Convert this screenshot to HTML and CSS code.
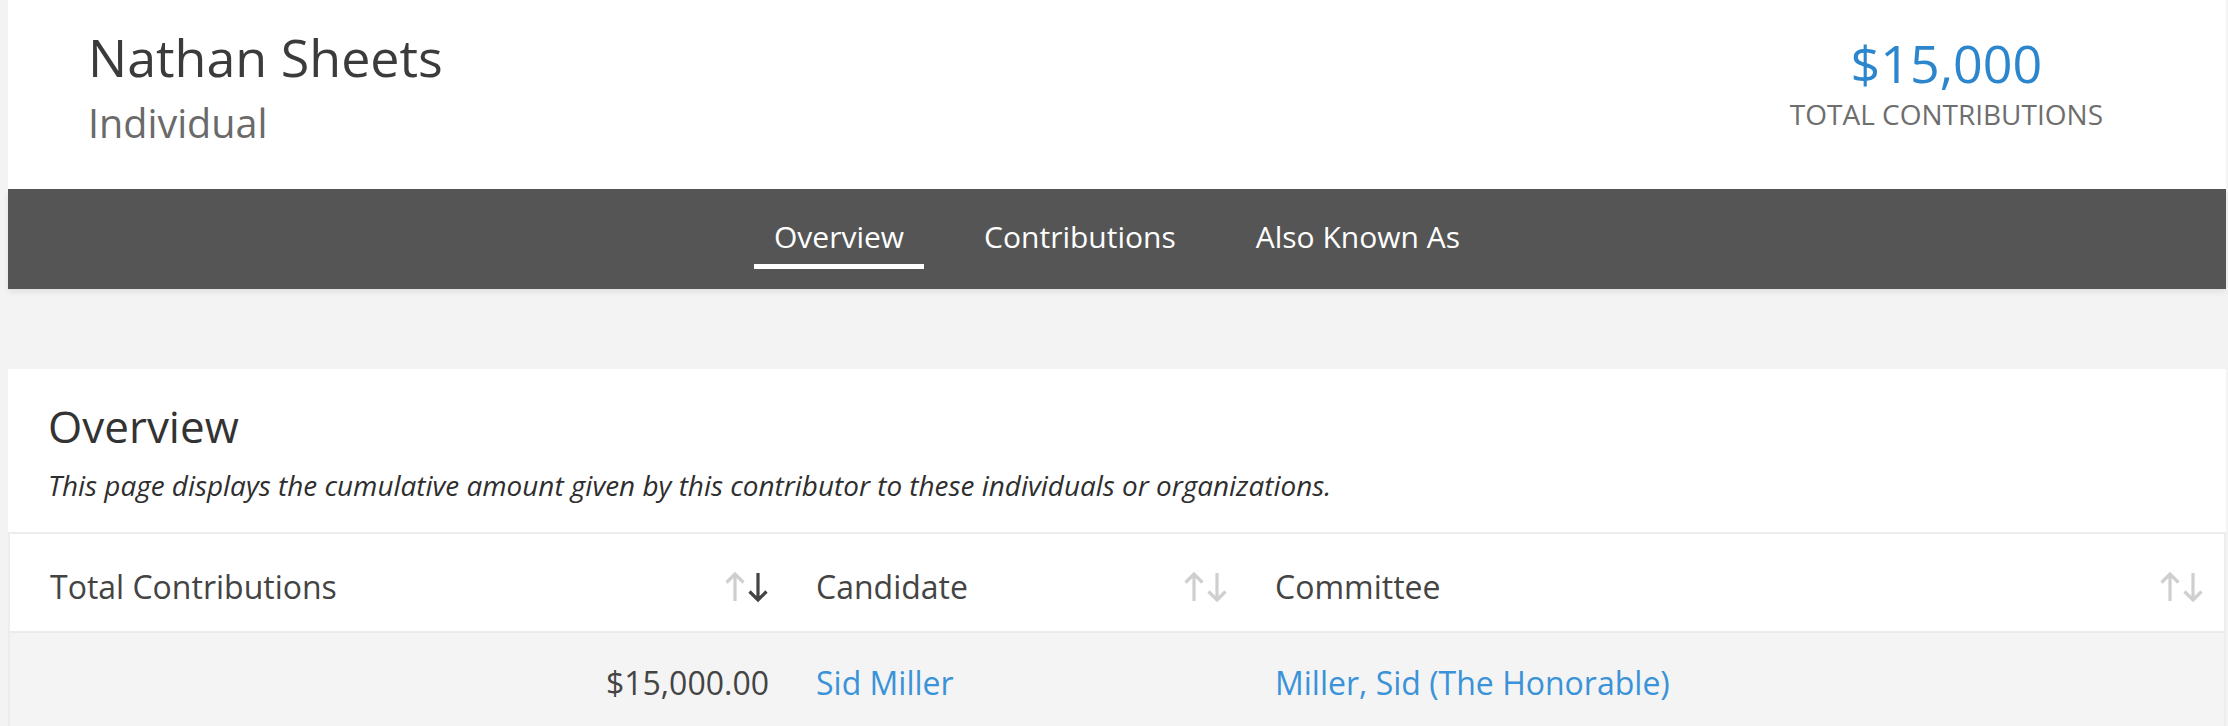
FILE: index.html
```html
<!DOCTYPE html>
<html lang="en">
<head>
<meta charset="utf-8">
<title>Nathan Sheets</title>
<link rel="stylesheet" href="styles.css">
</head>
<body>
<header class="profile">
  <div class="profile-name">
    <h1 class="name">Nathan Sheets</h1>
    <div class="kind">Individual</div>
  </div>
  <div class="profile-total">
    <div class="total-amount">$15,000</div>
    <div class="total-label">TOTAL CONTRIBUTIONS</div>
  </div>
</header>
<nav class="tabs">
  <a class="tab active">Overview</a>
  <a class="tab">Contributions</a>
  <a class="tab">Also Known As</a>
</nav>
<main class="content">
  <section class="card">
    <h2 class="card-title">Overview</h2>
    <p class="card-desc">This page displays the cumulative amount given by this contributor to these individuals or organizations.</p>
    <div class="table">
      <div class="row head">
        <div class="cell first"><span>Total Contributions</span>
          <svg class="sort" viewBox="0 0 44 32" width="44" height="32"><path class="up" d="M10 30V3M1.5 11.5L10 3l8.5 8.5"/><path class="down on" d="M33 2v27M24.5 20.5L33 29l8.5-8.5"/></svg>
        </div>
        <div class="cell"><span>Candidate</span>
          <svg class="sort" viewBox="0 0 44 32" width="44" height="32"><path class="up" d="M10 30V3M1.5 11.5L10 3l8.5 8.5"/><path class="down" d="M33 2v27M24.5 20.5L33 29l8.5-8.5"/></svg>
        </div>
        <div class="cell last"><span>Committee</span>
          <svg class="sort" viewBox="0 0 44 32" width="44" height="32"><path class="up" d="M10 30V3M1.5 11.5L10 3l8.5 8.5"/><path class="down" d="M33 2v27M24.5 20.5L33 29l8.5-8.5"/></svg>
        </div>
      </div>
      <div class="row body">
        <div class="cell first amount">$15,000.00</div>
        <div class="cell"><a class="link">Sid Miller</a></div>
        <div class="cell last"><a class="link">Miller, Sid (The Honorable)</a></div>
      </div>
    </div>
  </section>
</main>
</body>
</html>
```
FILE: styles.css
```css
* { box-sizing: border-box; }
html, body { margin: 0; }
body {
  padding: 0 2px 0 8px;
  background: #f3f3f3;
  font-family: "Open Sans", "Noto Sans", sans-serif;
  color: #333;
  height: 726px;
  overflow: hidden;
}
.profile {
  background: #fff;
  height: 189px;
  display: flex;
  justify-content: space-between;
  align-items: flex-start;
  padding: 0 123px 0 80px;
}
.profile-name { padding-top: 26px; }
.name {
  margin: 0;
  font-size: 52px;
  font-weight: 400;
  line-height: 62px;
  color: #3b3b3b;
}
.kind {
  margin-top: 12px;
  font-size: 39.5px;
  line-height: 47px;
  color: #6a6a6a;
}
.profile-total {
  padding-top: 32px;
  text-align: center;
}
.total-amount {
  font-size: 52px;
  line-height: 62px;
  color: #2b86cd;
}
.total-label {
  margin-top: 3px;
  font-size: 28px;
  line-height: 34px;
  color: #6e6e6e;
}
.tabs {
  height: 100px;
  background: #555;
  box-shadow: 0 3px 6px rgba(0,0,0,0.08);
  display: flex;
  justify-content: center;
  align-items: flex-start;
  padding-top: 30px;
  gap: 40px;
  position: relative;
}
.tab {
  color: #fff;
  font-size: 30px;
  line-height: 36px;
  padding: 0 20px 9px;
  border-bottom: 5px solid transparent;
}
.tab.active { border-bottom-color: #fff; }
.content { padding-top: 80px; }
.card {
  background: #fff;
  padding-top: 31px;
}
.card-title {
  margin: 0 0 0 40px;
  font-size: 44px;
  font-weight: 400;
  line-height: 53px;
  color: #333;
}
.card-desc {
  margin: 17px 0 0 40px;
  font-size: 27.9px;
  line-height: 30px;
  font-style: italic;
  color: #2e2e2e;
}
.table {
  margin-top: 32px;
  border: 2px solid #ededed;
  border-bottom: none;
}
.row {
  display: grid;
  grid-template-columns: 783px 459px 1fr;
}
.row.head {
  background: #fff;
  height: 99px;
  padding-top: 8px;
  border-bottom: 2px solid #ebebeb;
}
.row.body {
  background: #f4f4f4;
  height: 98px;
}
.cell {
  display: flex;
  align-items: center;
  justify-content: space-between;
  padding: 0 24px 0 23px;
  font-size: 32px;
  color: #444;
}
.cell.first { padding-left: 40px; }
.cell.last { padding-right: 20px; }
.cell.amount { justify-content: flex-end; }
.link { color: #3a93d8; }
.sort { display: block; flex: none; }
.sort path { fill: none; stroke: #cfcfcf; stroke-width: 3.2; }
.sort path.on { stroke: #444; }
```
